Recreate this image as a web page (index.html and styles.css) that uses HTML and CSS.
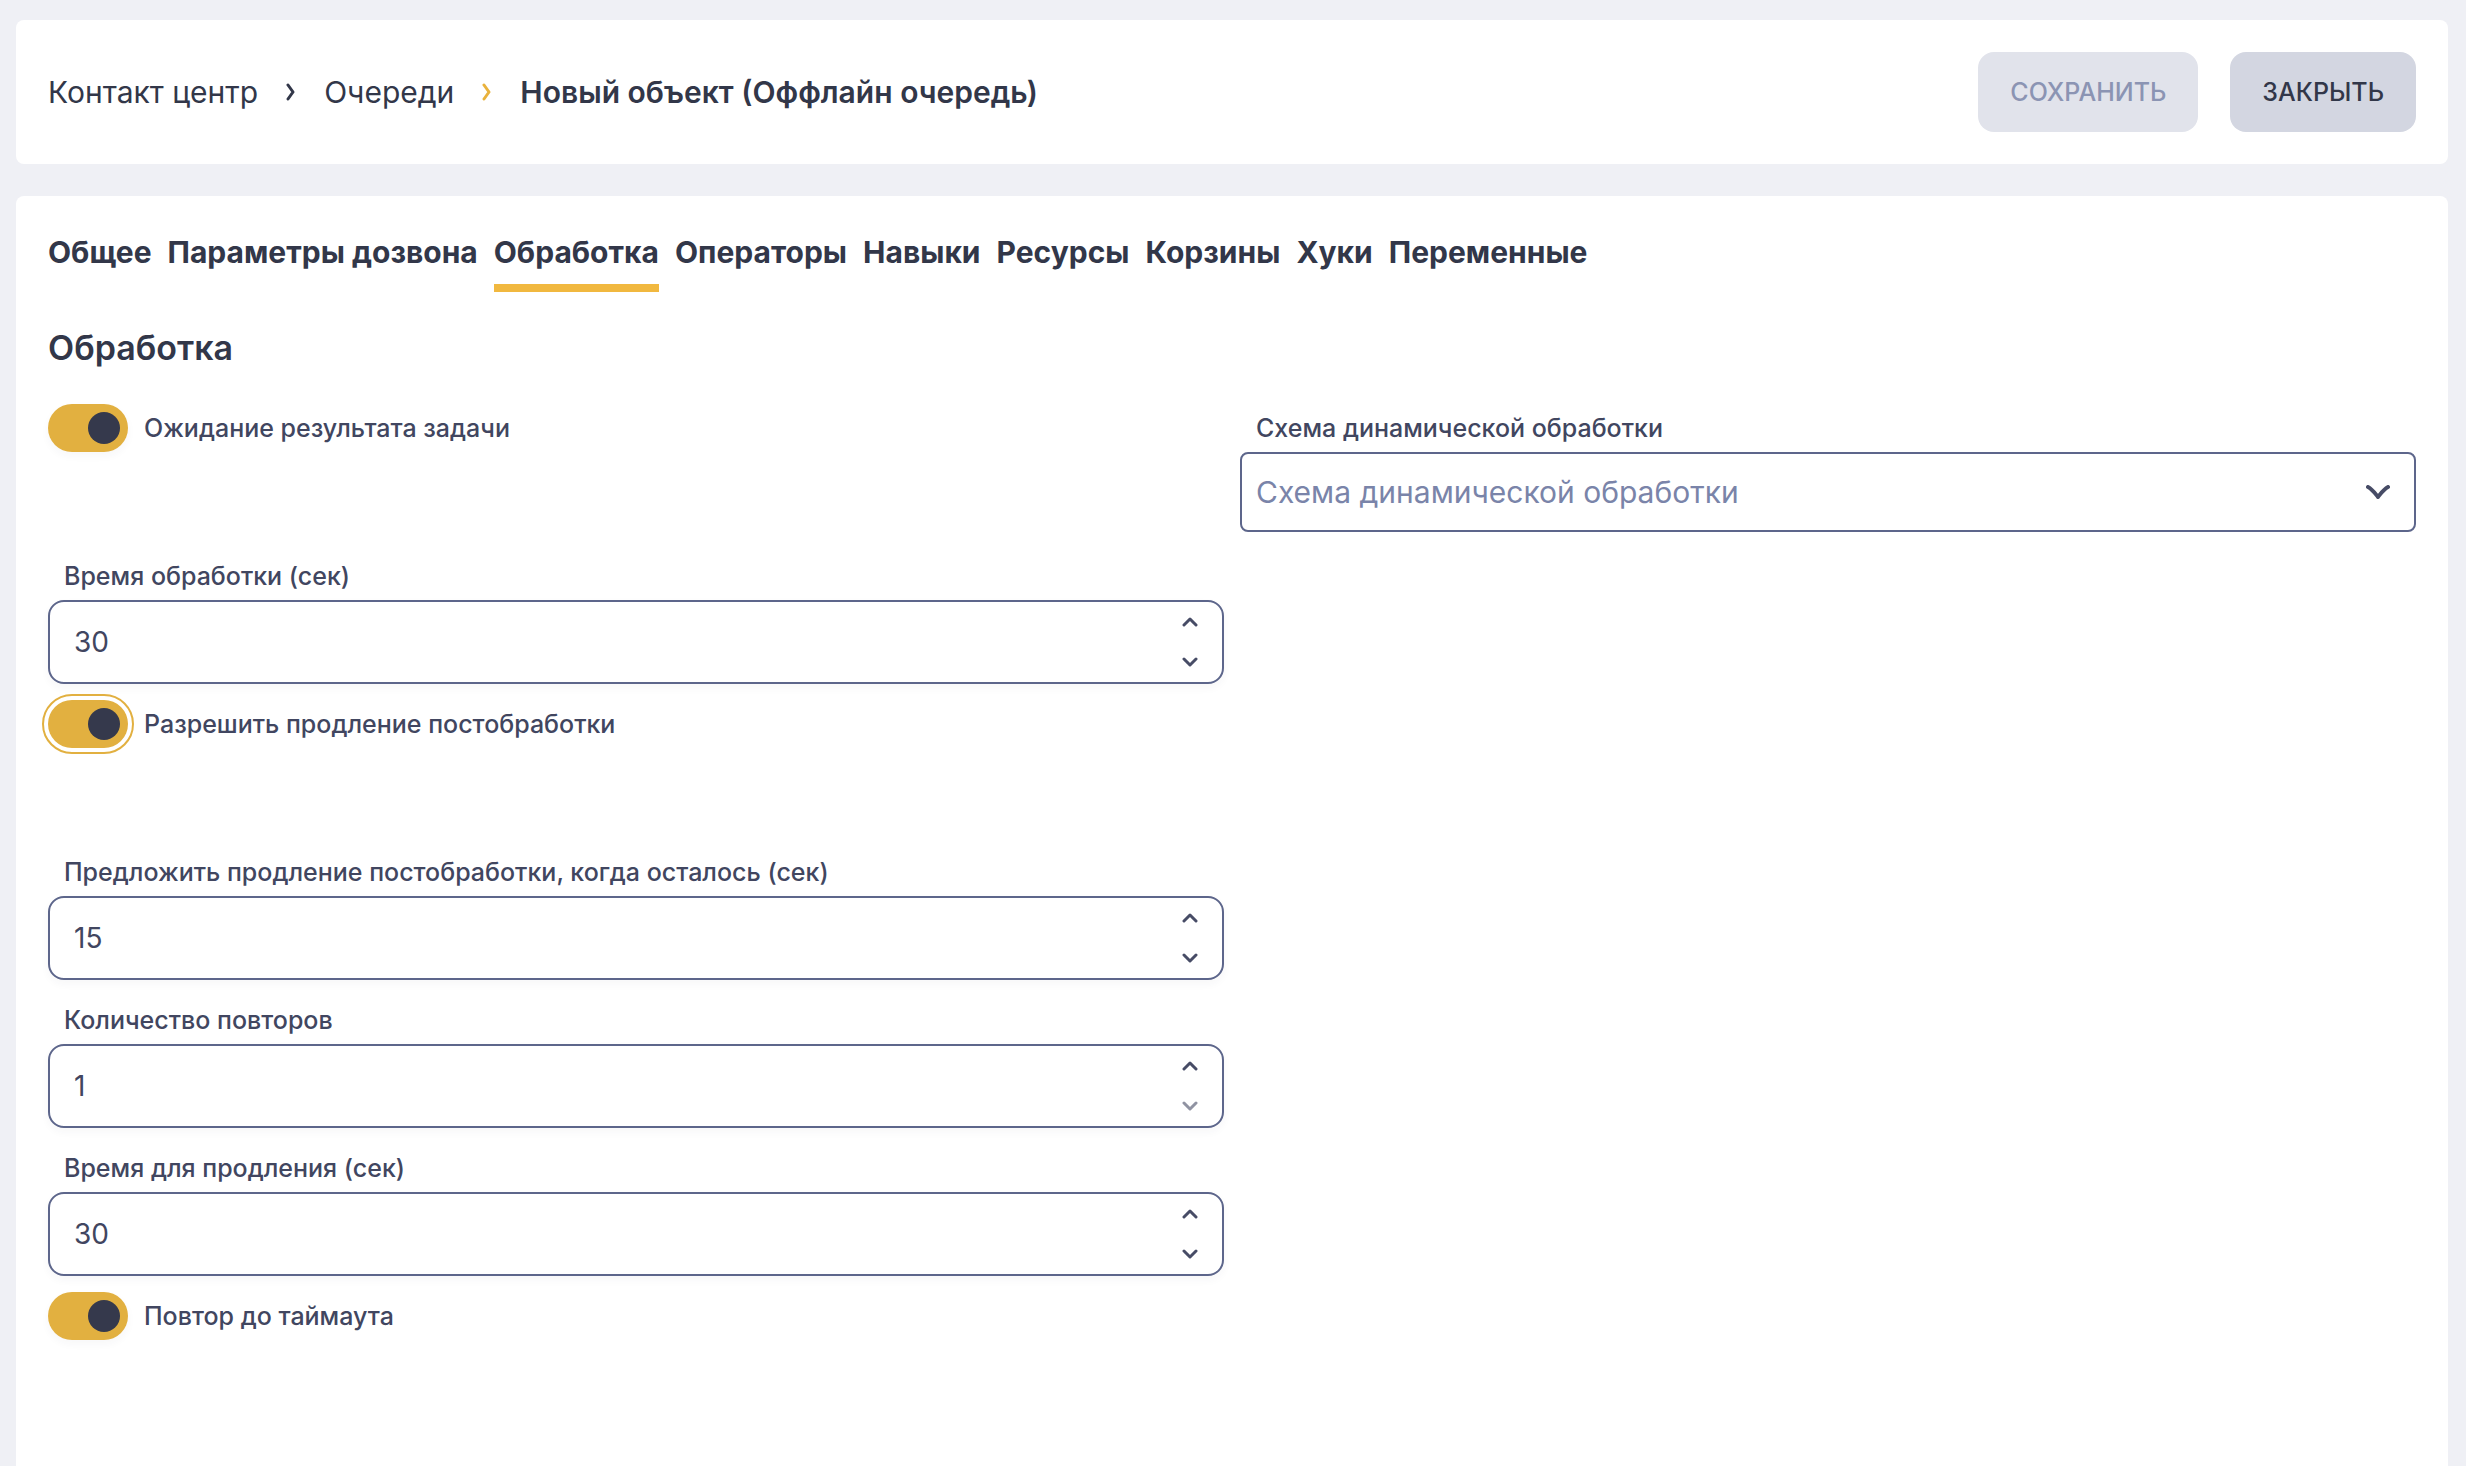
FILE: index.html
```
<!DOCTYPE html>
<html lang="ru">
<head>
    <meta charset="utf-8">
    <title>Новый объект (Оффлайн очередь)</title>
    <link rel="stylesheet" href="styles.css">
</head>
<body>
    <header class="page-header">
        <nav class="breadcrumbs">
            <a href="#">Контакт центр</a>
            <svg class="separator" viewBox="0 0 10 18"><path d="M2 2l5 7-5 7"/></svg>
            <a href="#">Очереди</a>
            <svg class="separator active" viewBox="0 0 10 18"><path d="M2 2l5 7-5 7"/></svg>
            <a href="#" class="current">Новый объект (Оффлайн очередь)</a>
        </nav>
        <div class="actions">
            <button type="button" class="btn btn-save" disabled>СОХРАНИТЬ</button>
            <button type="button" class="btn btn-close">ЗАКРЫТЬ</button>
        </div>
    </header>

    <main class="content">
        <nav class="tabs">
            <a href="#">Общее</a>
            <a href="#">Параметры дозвона</a>
            <a href="#" class="active">Обработка</a>
            <a href="#">Операторы</a>
            <a href="#">Навыки</a>
            <a href="#">Ресурсы</a>
            <a href="#">Корзины</a>
            <a href="#">Хуки</a>
            <a href="#">Переменные</a>
        </nav>

        <h1>Обработка</h1>

        <form class="form-grid">
            <div class="column">
                <div class="row">
                    <label class="switch">
                        <input type="checkbox" checked>
                        Ожидание результата задачи
                    </label>
                </div>

                <div class="row">
                    <label class="field-label" for="processingTime">Время обработки (сек)</label>
                    <div class="number-field">
                        <input type="number" id="processingTime" value="30">
                        <div class="spinner">
                            <button type="button" aria-label="Увеличить"><svg viewBox="0 0 16 10"><path d="M2 8l6-6 6 6"/></svg></button>
                            <button type="button" aria-label="Уменьшить"><svg viewBox="0 0 16 10"><path d="M2 2l6 6 6-6"/></svg></button>
                        </div>
                    </div>
                </div>

                <div class="row">
                    <label class="switch focused">
                        <input type="checkbox" checked>
                        Разрешить продление постобработки
                    </label>
                </div>

                <div class="row">
                    <label class="field-label" for="remaining">Предложить продление постобработки, когда осталось (сек)</label>
                    <div class="number-field">
                        <input type="number" id="remaining" value="15">
                        <div class="spinner">
                            <button type="button" aria-label="Увеличить"><svg viewBox="0 0 16 10"><path d="M2 8l6-6 6 6"/></svg></button>
                            <button type="button" aria-label="Уменьшить"><svg viewBox="0 0 16 10"><path d="M2 2l6 6 6-6"/></svg></button>
                        </div>
                    </div>
                </div>

                <div class="row">
                    <label class="field-label" for="renewals">Количество повторов</label>
                    <div class="number-field">
                        <input type="number" id="renewals" value="1" min="1">
                        <div class="spinner">
                            <button type="button" aria-label="Увеличить"><svg viewBox="0 0 16 10"><path d="M2 8l6-6 6 6"/></svg></button>
                            <button type="button" aria-label="Уменьшить" disabled><svg viewBox="0 0 16 10"><path d="M2 2l6 6 6-6"/></svg></button>
                        </div>
                    </div>
                </div>

                <div class="row">
                    <label class="field-label" for="renewalTime">Время для продления (сек)</label>
                    <div class="number-field">
                        <input type="number" id="renewalTime" value="30">
                        <div class="spinner">
                            <button type="button" aria-label="Увеличить"><svg viewBox="0 0 16 10"><path d="M2 8l6-6 6 6"/></svg></button>
                            <button type="button" aria-label="Уменьшить"><svg viewBox="0 0 16 10"><path d="M2 2l6 6 6-6"/></svg></button>
                        </div>
                    </div>
                </div>

                <div class="row">
                    <label class="switch">
                        <input type="checkbox" checked>
                        Повтор до таймаута
                    </label>
                </div>
            </div>

            <div class="column">
                <div class="row">
                    <label class="field-label" for="schema">Схема динамической обработки</label>
                    <div class="select-field">
                        <select id="schema">
                            <option value="">Схема динамической обработки</option>
                        </select>
                        <svg viewBox="0 0 24 14"><path d="M2 2c4 2 6 5 10 10 4-5 6-8 10-10"/></svg>
                    </div>
                </div>
            </div>
        </form>
    </main>
</body>
</html>
```
FILE: styles.css
```
* {
    box-sizing: border-box;
}

body {
    display: flex;
    flex-direction: column;
    gap: 32px;
    min-height: 100vh;
    margin: 0;
    padding: 20px 18px 0 16px;
    background: #eff0f5;
    color: #323749;
    font-family: Inter, "Noto Sans", sans-serif;
    font-size: 30px;
}

a {
    color: inherit;
    text-decoration: none;
}

button, input, select {
    font-family: inherit;
}

svg {
    fill: none;
    stroke: #474c66;
    stroke-linecap: round;
    stroke-linejoin: round;
}

.page-header {
    display: flex;
    justify-content: space-between;
    align-items: center;
    padding: 32px;
    background: white;
    border-radius: 8px;
}

.breadcrumbs {
    display: flex;
    align-items: center;
    gap: 28px;
}

.breadcrumbs .current {
    font-weight: 600;
}

.separator {
    width: 10px;
    height: 18px;
    stroke: #323749;
    stroke-width: 3;
}

.separator.active {
    stroke: #e9b23c;
}

.actions {
    display: flex;
    gap: 32px;
}

.btn {
    height: 80px;
    padding: 0 32px;
    border: none;
    border-radius: 16px;
    font-size: 25px;
    font-weight: 500;
    cursor: pointer;
}

.btn-save {
    background: #e1e3eb;
    color: #8b94b3;
}

.btn-close {
    background: #d3d6e1;
    color: #323749;
}

.content {
    flex: 1;
    padding: 32px;
    background: white;
    border-radius: 8px 8px 0 0;
}

.tabs {
    display: flex;
    gap: 16px;
    font-weight: 700;
    line-height: 48px;
}

.tabs a {
    padding-bottom: 8px;
    border-bottom: 8px solid transparent;
}

.tabs .active {
    border-color: #f1b83f;
}

h1 {
    margin: 32px 0;
    font-size: 34px;
    font-weight: 600;
    line-height: 48px;
}

.form-grid {
    display: grid;
    grid-template-columns: 1fr 1fr;
    gap: 16px;
}

.column {
    display: flex;
    flex-direction: column;
    gap: 16px;
}

.row {
    min-height: 132px;
}

.field-label, .switch {
    color: #414660;
    font-size: 25px;
    font-weight: 500;
    line-height: 48px;
}

.field-label {
    display: block;
    padding: 0 16px;
}

.switch {
    display: flex;
    align-items: center;
    gap: 16px;
}

.switch input {
    display: flex;
    justify-content: flex-end;
    align-items: center;
    appearance: none;
    width: 80px;
    height: 48px;
    margin: 0;
    padding: 8px;
    border-radius: 24px;
    background: #e2b040;
    box-shadow: 0 4px 8px rgba(50, 55, 73, 0.04);
}

.switch input::before {
    content: "";
    width: 32px;
    height: 32px;
    border-radius: 50%;
    background: #35394c;
}

.switch input:not(:checked) {
    justify-content: flex-start;
    background: #d3d6e1;
}

.switch.focused input {
    outline: 2px solid #e2b040;
    outline-offset: 4px;
    box-shadow: none;
}

.number-field {
    display: flex;
    align-items: center;
    height: 84px;
    padding: 0 24px;
    border: 2px solid #5d668b;
    border-radius: 16px;
    box-shadow: 0 4px 8px rgba(50, 55, 73, 0.04);
}

.number-field input {
    flex: 1;
    min-width: 0;
    padding: 0;
    border: none;
    outline: none;
    background: none;
    color: #414660;
    font-size: 28px;
    appearance: textfield;
}

.number-field input::-webkit-inner-spin-button {
    appearance: none;
}

.spinner {
    display: flex;
    flex-direction: column;
}

.spinner button {
    display: flex;
    align-items: center;
    height: 40px;
    padding: 0;
    border: none;
    background: none;
    cursor: pointer;
}

.spinner button:disabled {
    opacity: 0.6;
}

.spinner svg {
    width: 16px;
    height: 10px;
    stroke-width: 3;
}

.select-field {
    position: relative;
}

.select-field select {
    width: 100%;
    height: 80px;
    padding: 0 56px 0 14px;
    border: 2px solid #5d668b;
    border-radius: 8px;
    background: white;
    color: #7a84a9;
    font-size: 30px;
    appearance: none;
}

/* arrow sits over the select */
.select-field svg {
    position: absolute;
    top: 33px;
    right: 26px;
    width: 24px;
    height: 14px;
    stroke-width: 4;
    pointer-events: none;
}
```
